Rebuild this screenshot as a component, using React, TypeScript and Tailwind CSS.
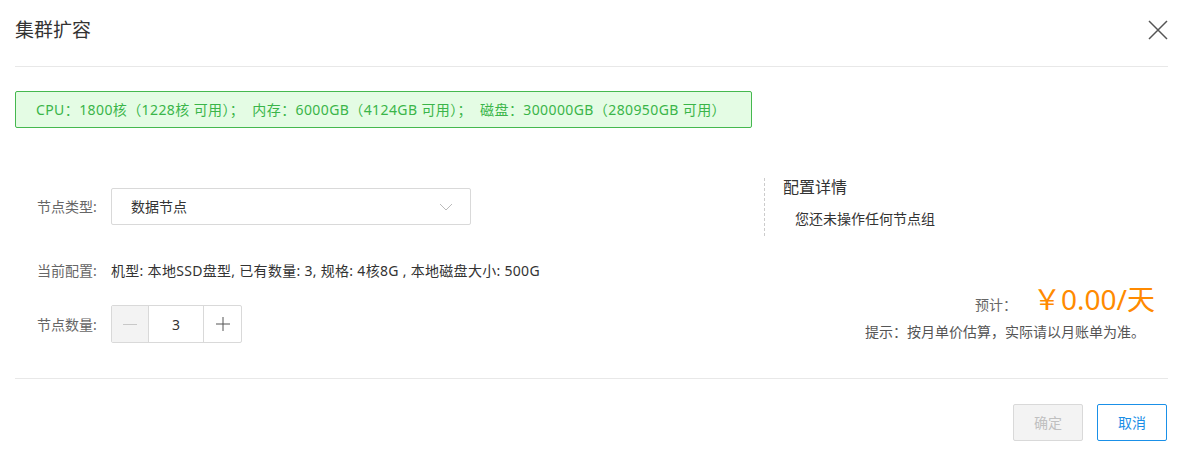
import React from "react";

const font = { fontFamily: '"Noto Sans", "Noto Sans CJK SC", sans-serif' };

export default function App() {
  return (
    <div className="w-[1183px] h-[450px] bg-white px-[15px] text-[#333]" style={font}>
      {/* header */}
      <div className="h-[67px] border-b border-[#e8e8e8] flex justify-between items-start pt-[18px]">
        <div className="text-[19px] leading-[24px] text-[#333]">集群扩容</div>
        <svg width="22" height="22" viewBox="0 0 22 22" className="mt-[1px] mr-[-1px]">
          <path d="M2 2 L20 20 M20 2 L2 20" stroke="#555" strokeWidth="1.5" fill="none" />
        </svg>
      </div>

      {/* alert */}
      <div className="mt-[24px] w-[737px] h-[37px] border border-[#45b84f] bg-[#e4fce4] rounded-[2px] flex items-center pl-[20px] text-[14px] tracking-[0.4px] text-[#3ab549] whitespace-pre">
        CPU：1800核（1228核 可用）；  内存：6000GB（4124GB 可用）；  磁盘：300000GB（280950GB 可用）
      </div>

      {/* main */}
      <div className="h-[250px] pt-[50px] flex">
        <div className="flex-1 pl-[22px] pt-[10px]">
          <div className="flex items-center h-[37px]">
            <div className="w-[74px] text-[14px] text-[#666]">节点类型:</div>
            <div className="w-[360px] h-[37px] border border-[#d9d9d9] rounded-[2px] flex items-center justify-between pl-[19px] pr-[17px]">
              <span className="text-[14px] text-[#333]">数据节点</span>
              <svg width="14" height="8" viewBox="0 0 14 8">
                <path d="M1 1 L7 7 L13 1" stroke="#bbb" strokeWidth="1" fill="none" />
              </svg>
            </div>
          </div>
          <div className="flex items-center h-[20px] mt-[35px] text-[14px]">
            <div className="w-[74px] text-[#666]">当前配置:</div>
            <div className="text-[#333] tracking-[0.3px]">机型: 本地SSD盘型, 已有数量: 3, 规格: 4核8G , 本地磁盘大小: 500G</div>
          </div>
          <div className="flex items-center h-[38px] mt-[25px]">
            <div className="w-[74px] text-[14px] text-[#666]">节点数量:</div>
            <div className="flex h-[38px] border border-[#d9d9d9] rounded-[2px]">
              <div className="w-[37px] bg-[#f3f3f3] border-r border-[#d9d9d9] flex items-center justify-center">
                <div className="w-[14px] h-px bg-[#c8c8c8]" />
              </div>
              <div className="w-[54px] flex items-center justify-center text-[14px] text-[#333]">3</div>
              <div className="w-[38px] border-l border-[#d9d9d9] flex items-center justify-center">
                <svg width="16" height="16" viewBox="0 0 16 16">
                  <path d="M8 1 V15 M1 8 H15" stroke="#555" strokeWidth="1" fill="none" />
                </svg>
              </div>
            </div>
          </div>
        </div>

        <div className="w-[404px] flex flex-col">
          <div className="border-l border-dashed border-[#ccc] h-[58px] pl-[18px]">
            <div className="text-[16px] leading-[18px] text-[#333]">配置详情</div>
            <div className="mt-[13px] pl-[12px] text-[14px] leading-[20px] text-[#333]">您还未操作任何节点组</div>
          </div>
          <div className="mt-[48px] flex justify-end items-baseline pr-[13px]">
            <span className="text-[14px] text-[#666] mr-[16px]">预计：</span>
            <span className="text-[28px] leading-[30px] text-[#ff8a00]">￥0.00/天</span>
          </div>
          <div className="mt-[7px] text-right pr-[23px] text-[14px] leading-[20px] text-[#555]">
            提示：按月单价估算，实际请以月账单为准。
          </div>
        </div>
      </div>

      <div className="h-px bg-[#e8e8e8]" />

      <div className="mt-[25px] flex justify-end gap-[14px] pr-[1px]">
        <button className="w-[70px] h-[37px] rounded-[2px] border border-[#d9d9d9] bg-[#f3f3f3] text-[14px] text-[#c0c0c0]">确定</button>
        <button className="w-[70px] h-[37px] rounded-[2px] border border-[#1a90e8] bg-white text-[14px] text-[#1a8ee6]">取消</button>
      </div>
    </div>
  );
}
